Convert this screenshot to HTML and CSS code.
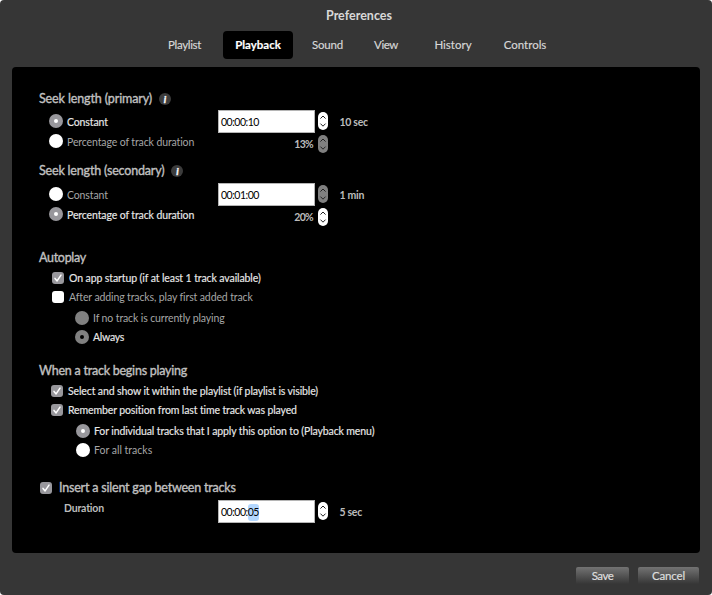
FILE: index.html
```html
<!DOCTYPE html>
<html lang="en">
<head>
<meta charset="utf-8">
<title>Preferences</title>
<link rel="stylesheet" href="styles.css">
</head>
<body>
<svg class="defs" width="0" height="0">
  <symbol id="check" viewBox="0 0 12 12"><path d="M3 6.4 5.1 8.9 9 3.1" fill="none" stroke="#fff" stroke-width="1.5" stroke-linecap="round" stroke-linejoin="round"/></symbol>
  <symbol id="arrows" viewBox="0 0 10 18"><path d="M2.7 6.3 5 4l2.3 2.3M2.7 11.9 5 14.2l2.3-2.3" fill="none" stroke="currentColor" stroke-width="1" stroke-linecap="round" stroke-linejoin="round"/></symbol>
</svg>
<div class="window">
  <header class="title">Preferences</header>
  <nav class="tabs">
    <span class="tab tab-playlist">Playlist</span>
    <span class="tab tab-playback active">Playback</span>
    <span class="tab tab-sound">Sound</span>
    <span class="tab tab-view">View</span>
    <span class="tab tab-history">History</span>
    <span class="tab tab-controls">Controls</span>
  </nav>
  <main class="panel">
    <section class="seek">
      <h2>Seek length (primary)<span class="info">i</span></h2>
      <div class="columns">
        <div class="options">
          <label class="opt on"><i class="radio checked"></i><span>Constant</span></label>
          <label class="opt"><i class="radio"></i><span>Percentage of track duration</span></label>
        </div>
        <div class="fields">
          <div class="field"><span class="input">00:00:10</span><svg class="stepper"><use href="#arrows"/></svg><b class="value">10 sec</b></div>
          <div class="field percent"><b class="pct">13%</b><svg class="stepper off"><use href="#arrows"/></svg></div>
        </div>
      </div>
    </section>
    <section class="seek second">
      <h2>Seek length (secondary)<span class="info">i</span></h2>
      <div class="columns">
        <div class="options">
          <label class="opt"><i class="radio"></i><span>Constant</span></label>
          <label class="opt on"><i class="radio checked"></i><span>Percentage of track duration</span></label>
        </div>
        <div class="fields">
          <div class="field"><span class="input">00:01:00</span><svg class="stepper off"><use href="#arrows"/></svg><b class="value">1 min</b></div>
          <div class="field percent"><b class="pct">20%</b><svg class="stepper"><use href="#arrows"/></svg></div>
        </div>
      </div>
    </section>
    <section class="group autoplay">
      <h2>Autoplay</h2>
      <label class="opt on"><svg class="box checked"><use href="#check"/></svg><span class="wide">On app startup (if at least 1 track available)</span></label>
      <label class="opt"><svg class="box"></svg>After adding tracks, play first added track</label>
      <div class="nested">
        <label class="opt"><i class="radio disabled"></i><span>If no track is currently playing</span></label>
        <label class="opt on"><i class="radio disabled dot"></i><span class="tight">Always</span></label>
      </div>
    </section>
    <section class="group begins">
      <h2>When a track begins playing</h2>
      <label class="opt on"><svg class="box checked"><use href="#check"/></svg>Select and show it within the playlist (if playlist is visible)</label>
      <label class="opt on"><svg class="box checked"><use href="#check"/></svg>Remember position from last time track was played</label>
      <div class="nested">
        <label class="opt on"><i class="radio checked"></i><span>For individual tracks that I apply this option to (Playback menu)</span></label>
        <label class="opt"><i class="radio"></i><span class="loose">For all tracks</span></label>
      </div>
    </section>
    <section class="gap">
      <h2><svg class="box checked"><use href="#check"/></svg>Insert a silent gap between tracks</h2>
      <div class="columns">
        <b class="duration">Duration</b>
        <div class="field"><span class="input">00:00:<mark>05</mark></span><svg class="stepper"><use href="#arrows"/></svg><b class="value">5 sec</b></div>
      </div>
    </section>
  </main>
  <footer class="actions">
    <button class="btn save">Save</button>
    <button class="btn cancel">Cancel</button>
  </footer>
</div>
</body>
</html>
```
FILE: styles.css
```css
* { box-sizing: border-box; }
body {
  margin: 0;
  background: #fff;
  font: 10.5px/20px Lato, sans-serif;
  letter-spacing: -0.12px;
  color: #a6a6a6;
  white-space: nowrap;
}
.defs { position: absolute; }
.window {
  width: 712px;
  height: 595px;
  background: #363636;
  border-radius: 4px;
  overflow: hidden;
}
.title {
  height: 31px;
  padding: 6px 0 0 6px;
  text-align: center;
  font-size: 12.5px;
  font-weight: 700;
  letter-spacing: 0;
  color: #d8d8d8;
}
.tabs {
  display: flex;
  gap: 4px;
  padding-left: 150px;
  height: 36px;
}
.tab {
  height: 28px;
  border-radius: 4px;
  text-align: center;
  font-size: 11.5px;
  line-height: 28px;
  letter-spacing: 0;
  color: #d8d8d8;
  -webkit-text-stroke: 0.15px;
}
.tab-playlist { width: 69px; letter-spacing: -0.33px; }
.tab-playback { width: 70px; }
.tab-sound { width: 61px; letter-spacing: -0.2px; }
.tab-view { width: 48px; letter-spacing: -0.4px; }
.tab-history { width: 78px; }
.tab-controls { width: 58px; }
.tab.active {
  background: #000;
  color: #fff;
  font-weight: 700;
}
.panel {
  margin: 0 12px;
  height: 486px;
  padding: 21px 0 0 27px;
  background: #000;
  border-radius: 4px;
}
h2 {
  display: flex;
  align-items: center;
  margin: 0;
  height: 20px;
  font-size: 12.5px;
  line-height: 20px;
  font-weight: 400;
  letter-spacing: -0.12px;
  color: #c0c0c0;
  -webkit-text-stroke: 0.35px;
}
.info {
  width: 12px;
  height: 12px;
  margin-left: 7px;
  border-radius: 50%;
  background: #3c3c3c;
  color: #fff;
  text-align: center;
  font: italic 700 10px/12px Lato, sans-serif;
}
.seek { height: 73px; padding-top: 1px; }
.second { height: 87px; padding-top: 0; }
.second h2 { letter-spacing: -0.18px; }
.columns { display: flex; }
.seek:not(.second) .columns { margin-top: -1px; }
.options {
  width: 179px;
  padding: 3px 0 0 10px;
}
.opt {
  display: flex;
  align-items: center;
  height: 20px;
}
.options .opt span { padding-top: 2px; }
.opt.on { color: #e8e8e8; -webkit-text-stroke: 0.15px; }
.wide { letter-spacing: -0.1px; }
.tight { letter-spacing: -0.28px; }
.loose { letter-spacing: 0; }
.radio {
  display: flex;
  align-items: center;
  justify-content: center;
  width: 14px;
  height: 14px;
  margin-right: 4px;
  border-radius: 50%;
  background: #fff;
}
.radio.checked { background: #98979c; }
.radio.checked::before,
.radio.dot::before {
  content: "";
  width: 4px;
  height: 4px;
  border-radius: 50%;
  background: #fff;
}
.radio.disabled { background: #808080; }
.radio.dot::before { background: #000; }
.box {
  width: 12px;
  height: 12px;
  margin-right: 5px;
  border-radius: 3px;
  background: #fff;
}
.box.checked { background: #98979c; }
.fields { padding-top: 2px; }
.field {
  display: flex;
  height: 23px;
}
.input {
  width: 97px;
  height: 23px;
  padding-left: 2px;
  border: 1px solid #b5b5b5;
  background: #fff;
  color: #000;
  line-height: 22px;
  letter-spacing: -0.48px;
}
mark {
  display: inline-block;
  height: 17px;
  line-height: 17px;
  border-radius: 3px;
  background: #b3d7ff;
  color: #000;
}
.stepper {
  width: 10px;
  height: 18px;
  margin: 1.5px 0 0 2.5px;
  border-radius: 5px;
  background: #fff;
  color: #222;
}
.stepper.off { background: #808080; }
.value {
  margin-left: 12px;
  line-height: 24px;
  letter-spacing: -0.3px;
  color: #bcbcbc;
}
.percent b {
  width: 97px;
  text-align: right;
  padding-right: 2px;
  line-height: 22px;
  letter-spacing: -0.7px;
  color: #bcbcbc;
}
.group .opt { height: 19px; }
.nested { padding: 2px 0 0 24px; }
.nested span { padding-top: 1px; }
.autoplay { height: 113px; }
.autoplay > .opt { padding-left: 13px; }
.autoplay > h2 { letter-spacing: -0.29px; }
.autoplay .nested { padding-left: 36px; }
.begins { height: 117px; }
.begins > .opt { padding-left: 12px; }
.begins > h2 { letter-spacing: -0.23px; }
.begins .nested { padding-left: 37px; }
.gap h2 { letter-spacing: -0.2px; padding-left: 1px; }
.gap .box { margin-right: 7px; }
.gap .columns { padding-top: 2px; }
.duration {
  width: 179px;
  padding-left: 25px;
  line-height: 16px;
  letter-spacing: -0.2px;
  color: #bcbcbc;
}
.actions {
  display: flex;
  justify-content: flex-end;
  gap: 9px;
  padding: 14px 13px 0 0;
}
.btn {
  height: 17px;
  padding: 0;
  border: 0;
  border-radius: 2px 2px 0 0;
  background: linear-gradient(#737373, #363636);
  color: #dedede;
  font: 11.5px/17px Lato, sans-serif;
  -webkit-text-stroke: 0.2px;
}
.save { width: 53px; letter-spacing: -0.5px; }
.cancel { width: 61px; letter-spacing: -0.17px; }
```
